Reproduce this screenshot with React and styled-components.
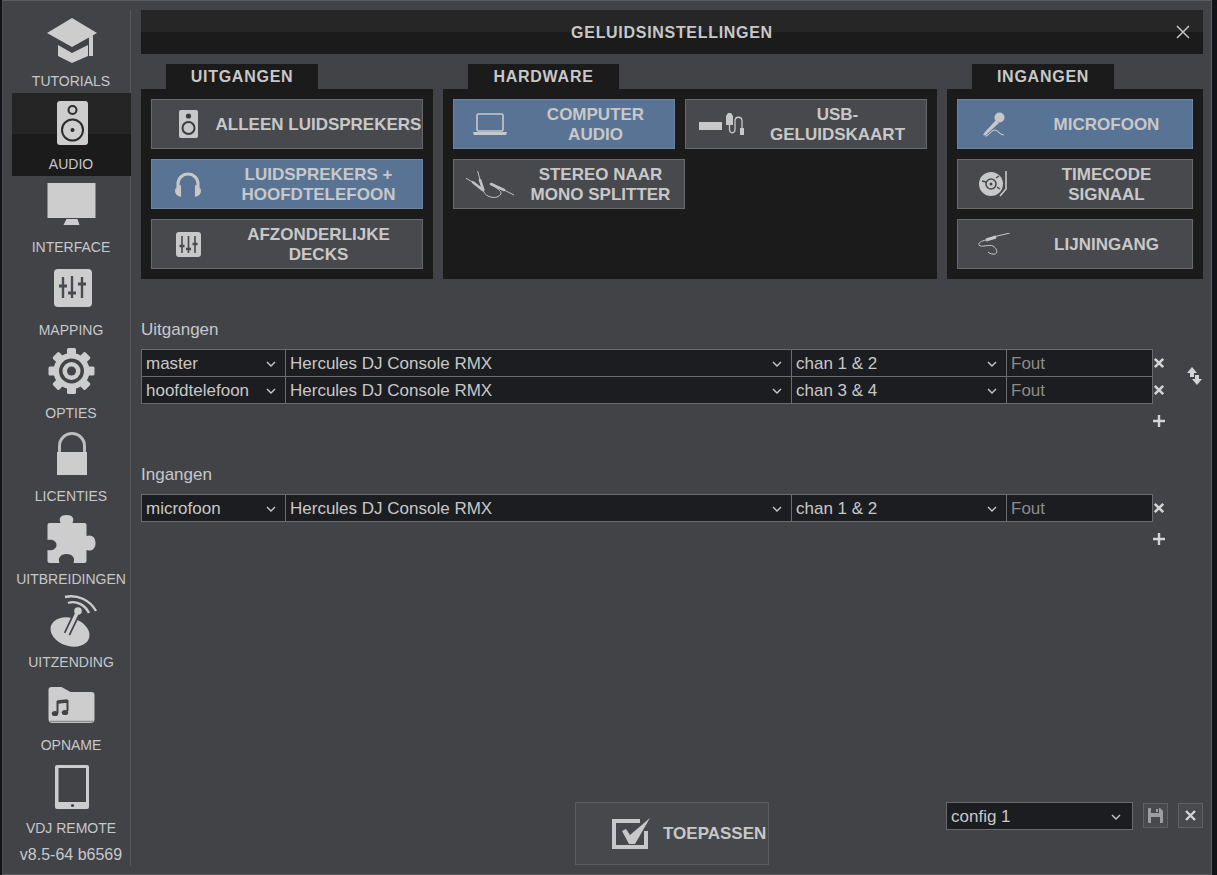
import React from "react"
import styled, {createGlobalStyle} from "styled-components"

const ink = "#cdcdcd"
const dark = "#2b2b2d"

const Global = createGlobalStyle`
  html, body {
    margin: 0;
    padding: 0;
    background: #121317;
    overflow: hidden;
  }
  body {
    font-family: "Liberation Sans", Arial, sans-serif;
  }
`

const Window = styled.div`
  box-sizing: border-box;
  margin-left: 2px;
  width: 1210px;
  height: 875px;
  display: flex;
  background: #424347;
  border: 1px solid #5c5d60;
  border-left-color: #4c4d50;
  color: #c8c8c8;
`

const Nav = styled.nav`
  box-sizing: border-box;
  flex: none;
  width: 119px;
  margin: 9px 0 8px 9px;
  border-right: 1px solid #56575a;
  display: flex;
  flex-direction: column;
`

const NavItem = styled.div`
  flex: none;
  height: 83px;
  margin-right: -1px;
  padding-top: 6px;
  box-sizing: border-box;
  display: flex;
  flex-direction: column;
  align-items: center;
  background: ${props => props.$active ? "linear-gradient(#252526 0, #252526 41px, #1b1b1b 41px)" : "none"};
`

const NavIcon = styled.svg`
  display: block;
  width: 60px;
  height: 50px;
  overflow: visible;
`

const NavLabel = styled.div`
  margin-top: 7px;
  padding-right: 1px;
  font-size: 14px;
  line-height: 16px;
  color: #c6c8cc;
  white-space: nowrap;
`

const Version = styled.div`
  margin-top: 6px;
  font-size: 16px;
  line-height: 18px;
  text-align: center;
  color: #c6c8cc;
`

const Main = styled.main`
  flex: 1;
  min-width: 0;
  display: flex;
  flex-direction: column;
  padding: 9px 8px 9px 10px;
`

const TitleBar = styled.header`
  flex: none;
  height: 44px;
  display: grid;
  grid-template-columns: 1fr auto 1fr;
  align-items: center;
  background: linear-gradient(#262627 0, #262627 22px, #1b1b1b 22px);
`

const Title = styled.h1`
  grid-column: 2;
  margin: 0;
  padding-top: 2px;
  font-size: 16px;
  font-weight: bold;
  letter-spacing: 0.7px;
  color: #c8c8c8;
`

const Close = styled.svg`
  grid-column: 3;
  justify-self: end;
  margin-right: 13px;
  width: 14px;
  height: 14px;
`

const Panels = styled.div`
  margin-top: 10px;
  display: grid;
  grid-template-columns: 292px 494px 256px;
  gap: 10px;
`

const Tab = styled.div`
  box-sizing: border-box;
  width: ${props => props.$width}px;
  height: 25px;
  margin-left: 25px;
  background: #1b1b1b;
  font-size: 16px;
  font-weight: bold;
  letter-spacing: 0.75px;
  line-height: 26px;
  text-align: center;
`

const PanelBody = styled.div`
  box-sizing: border-box;
  height: 190px;
  padding: 10px;
  background: #1b1b1b;
  display: flex;
  flex-wrap: wrap;
  align-content: flex-start;
  gap: 10px;
`

const ModeButton = styled.button`
  box-sizing: border-box;
  width: ${props => props.$width}px;
  height: 50px;
  padding: 0;
  display: flex;
  align-items: center;
  font-family: inherit;
  color: #c8c8c8;
  background: ${props => props.$on ? "#587394" : "#48494d"};
  border: 1px solid ${props => props.$on ? "#6c84a1" : "#68696c"};
`

const ModeIcon = styled.span`
  flex: none;
  width: 72px;
  margin-right: -9px;
  display: flex;
  justify-content: center;
  align-items: center;
`

const ModeText = styled.span`
  flex: 1;
  min-width: 0;
  padding-top: 2px;
  font-size: 17px;
  font-weight: bold;
  line-height: 20px;
  text-align: center;
  white-space: pre-line;
`

const SectionLabel = styled.div`
  margin-top: ${props => props.$top}px;
  margin-bottom: 10px;
  padding-top: 1px;
  font-size: 17px;
  line-height: 19px;
  color: #c6c8cc;
`

const RowGroup = styled.div`
  display: flex;
  align-items: stretch;
`

const Table = styled.div`
  flex: none;
  width: 1012px;
  box-sizing: border-box;
  display: grid;
  grid-template-columns: 143px 505px 214px 145px;
  grid-auto-rows: 26px;
  gap: 1px;
  background: #6a6b6d;
  border: 1px solid #6a6b6d;
`

const Cell = styled.div`
  box-sizing: border-box;
  display: flex;
  justify-content: space-between;
  align-items: center;
  padding: 2px 9px 0 4px;
  background: #1c1d20;
  font-size: 17px;
  color: ${props => props.$muted ? "#8b8b8b" : "#c8c8c8"};
  white-space: nowrap;
`

const Chevron = styled.svg`
  flex: none;
  width: 10px;
  height: 6px;
`

const RemoveColumn = styled.div`
  flex: none;
  width: 12px;
  padding-top: 1px;
  display: grid;
  grid-auto-rows: 26px;
  gap: 1px;
  align-items: center;
`

const SmallCross = styled.svg`
  display: block;
  width: 12px;
  height: 12px;
`

const Swap = styled.svg`
  align-self: center;
  margin-left: 22px;
  width: 15px;
  height: 19px;
`

const Add = styled.svg`
  display: block;
  margin: 10px 0 0 1011px;
  width: 14px;
  height: 14px;
`

const Footer = styled.footer`
  margin-top: auto;
  display: grid;
  grid-template-columns: 1fr auto 1fr;
  align-items: start;
`

const Apply = styled.button`
  grid-column: 2;
  box-sizing: border-box;
  width: 194px;
  height: 63px;
  padding: 0 0 0 36px;
  display: flex;
  align-items: center;
  gap: 13px;
  font-family: inherit;
  font-size: 17px;
  font-weight: bold;
  color: #c8c8c8;
  background: #47484c;
  border: 1px solid #5c5d60;
`

const FooterRight = styled.div`
  grid-column: 3;
  justify-self: end;
  display: flex;
  align-items: flex-start;
`

const ConfigSelect = styled.div`
  box-sizing: border-box;
  width: 187px;
  height: 28px;
  display: flex;
  justify-content: space-between;
  align-items: center;
  padding: 2px 11px 0 4px;
  background: #1c1d20;
  border: 1px solid #6a6b6d;
  font-size: 17px;
`

const SquareButton = styled.button`
  box-sizing: border-box;
  width: 25px;
  height: 25px;
  margin: 1px 0 0 10px;
  padding: 0;
  display: flex;
  justify-content: center;
  align-items: center;
  background: #48494d;
  border: 1px solid #5f6063;
`

const chevron = (
  <Chevron viewBox="0 0 10 6">
    <path d="M1 1 L5 5 L9 1" fill="none" stroke="#c8c8c8" strokeWidth="1.4" />
  </Chevron>
)

const cross = (
  <SmallCross viewBox="0 0 12 12">
    <path d="M1.8 1.8 L10.2 10.2 M10.2 1.8 L1.8 10.2" stroke="#d4d4d4" strokeWidth="2.6" />
  </SmallCross>
)

const gearTeeth = [0, 45, 90, 135, 180, 225, 270, 315]

const navItems = [
  {label: "TUTORIALS", icon: (
    <g fill={ink}>
      <path d="M5 17 L30 2 L55 17 L30 31 Z" />
      <path d="M16 29 L30 37 L46 29 V40 L30 47 L16 40 Z" />
      <path d="M47 21 L51 19 V40 H47 Z" />
    </g>
  )},
  {label: "AUDIO", active: true, icon: (
    <g>
      <rect x="15" y="2" width="31" height="44" rx="3" fill={ink} />
      <circle cx="30.5" cy="11" r="4" fill="none" stroke={dark} strokeWidth="2" />
      <circle cx="30.5" cy="31" r="10.5" fill="none" stroke={dark} strokeWidth="2" />
      <circle cx="30.5" cy="31" r="2" fill={dark} />
    </g>
  )},
  {label: "INTERFACE", icon: (
    <g fill={ink}>
      <rect x="5.5" y="1" width="48" height="35" />
      <path d="M24.5 37 H35.5 L37.5 43 H21.5 Z" />
    </g>
  )},
  {label: "MAPPING", icon: (
    <g>
      <rect x="12" y="4" width="38" height="38" rx="4" fill={ink} />
      <path d="M21 12 V33 M30 11 V33 M40 12 V33" stroke="#4a4b4e" strokeWidth="2.4" />
      <path d="M17 21 H25 M26 28 H34 M36 19 H44" stroke="#4a4b4e" strokeWidth="3" />
    </g>
  )},
  {label: "OPTIES", icon: (
    <g transform="translate(-0.5 0)">
      <g fill={ink}>
        {gearTeeth.map(a => <rect key={a} x="25.5" y="0" width="9" height="12" rx="1.5" transform={"rotate(" + a + " 30 23)"} />)}
        <circle cx="30" cy="23" r="18" />
      </g>
      <circle cx="30" cy="23" r="12.5" fill="#424347" />
      <circle cx="30" cy="23" r="9" fill={ink} />
      <circle cx="30" cy="23" r="4.5" fill="#424347" />
    </g>
  )},
  {label: "LICENTIES", icon: (
    <g>
      <path d="M17.5 22 V15 a12.5 12.5 0 0 1 25 0 V22" fill="none" stroke="#bdbdbd" strokeWidth="3" />
      <rect x="15" y="21" width="30" height="23" fill={ink} />
    </g>
  )},
  {label: "UITBREIDINGEN", icon: (
    <path fill={ink} transform="translate(-0.5 0)" d="M6 11 a2 2 0 0 1 2-2 H19 c-2-5 0-8 6-8 s8 3 6 8 H43 a2 2 0 0 1 2 2 V22 c5-2 9 1 9 7 s-4 9-9 7 V47 a2 2 0 0 1-2 2 H32 c2-5-1-9-7-9 s-9 4-7 9 H8 a2 2 0 0 1-2-2 V36 c5 1 9-1 9-5 s-4-6-9-5 z" />
  )},
  {label: "UITZENDING", icon: (
    <g>
      <ellipse cx="28" cy="35" rx="20" ry="14" transform="rotate(18 28 35)" fill={ink} />
      <path d="M25 37 L36 14" stroke="#424347" strokeWidth="7" />
      <path d="M25 37 L36 14" stroke={ink} strokeWidth="3.6" strokeLinecap="round" />
      <circle cx="36" cy="14" r="3.8" fill={ink} />
      <path d="M23 0 C35 -3 48 3 54 14" fill="none" stroke={ink} strokeWidth="2.4" />
      <path d="M26 6 C34 3 43 8 47 16" fill="none" stroke={ink} strokeWidth="2.4" />
    </g>
  )},
  {label: "OPNAME", icon: (
    <g transform="translate(-0.5 0)">
      <path fill={ink} d="M7 10 a3 3 0 0 1 3-3 H20 l9 5 H50 a3 3 0 0 1 3 3 V39 a4 4 0 0 1-4 4 H11 a4 4 0 0 1-4-4 z" />
      <path d="M8 41.5 H52" stroke="#8e8e8e" strokeWidth="1.5" />
      <path d="M16 33 V22 L26 21 V31" fill="none" stroke="#424347" strokeWidth="2" />
      <path d="M16 22 L26 21" stroke="#424347" strokeWidth="3.4" />
      <ellipse cx="13.5" cy="33.5" rx="3.2" ry="2.6" fill="#424347" />
      <ellipse cx="23.5" cy="32.5" rx="3.2" ry="2.6" fill="#424347" />
    </g>
  )},
  {label: "VDJ REMOTE", icon: (
    <g>
      <rect x="13" y="2" width="34" height="44" rx="2" fill={ink} />
      <rect x="16.5" y="5" width="27.5" height="34" fill="#424347" />
      <circle cx="30.5" cy="42.5" r="1.6" fill="#424347" />
    </g>
  )}
]

const SpeakerIcon = () => (
  <svg width="19" height="28" viewBox="0 0 19 28">
    <rect width="19" height="28" rx="2" fill="#c8c8c8" />
    <circle cx="9.5" cy="6" r="2.6" fill="#3a3b3e" />
    <circle cx="9.5" cy="18" r="6" fill="none" stroke="#3a3b3e" strokeWidth="2" />
  </svg>
)

const HeadphonesIcon = () => (
  <svg width="26" height="25" viewBox="0 0 26 25">
    <path d="M3 15 V12 a10 10 0 0 1 20 0 V15" fill="none" stroke="#c8c8c8" strokeWidth="3" />
    <path d="M6 13 V25 C2 24 0 22 0 19 C0 16 2 14 6 13 Z M20 13 V25 C24 24 26 22 26 19 C26 16 24 14 20 13 Z" fill="#c8c8c8" />
  </svg>
)

const MixerIcon = () => (
  <svg width="25" height="25" viewBox="0 0 25 25">
    <rect width="25" height="25" rx="3" fill="#c8c8c8" />
    <path d="M6 4 V21 M12.5 4 V21 M19 4 V21" stroke="#48494d" strokeWidth="1.6" />
    <path d="M3.5 14 H8.5 M10 17 H15 M16.5 12 H21.5" stroke="#48494d" strokeWidth="2.4" />
  </svg>
)

const LaptopIcon = () => (
  <svg width="34" height="22" viewBox="0 0 34 22">
    <rect x="4" y="1" width="26" height="17" rx="1.5" fill="none" stroke="#c8c8c8" strokeWidth="1.6" />
    <path d="M0 19 H34 L33 22 H1 Z" fill="#c8c8c8" />
  </svg>
)

const UsbIcon = () => (
  <svg width="47" height="22" viewBox="0 0 47 22">
    <rect x="0" y="9" width="23" height="8" fill="#c8c8c8" />
    <path d="M29 0 H32 L34 3 V12 H27 V3 Z" fill="#c8c8c8" />
    <path d="M30.5 12 V16 C30.5 21 36 21 36 16 V8 C36 3 43 3 43 8 V15" fill="none" stroke="#c8c8c8" strokeWidth="1.3" />
    <rect x="41" y="15" width="4" height="7" fill="#c8c8c8" />
  </svg>
)

const SplitterIcon = () => (
  <svg width="48" height="27" viewBox="0 0 48 27">
    <g stroke="#c2c2c2" fill="none" strokeLinecap="round">
      <path d="M0 7.3 L7 11.3 M11.7 0 L14 9" strokeWidth="1" />
      <path d="M7 11.3 L16.7 19 M14 9 L17.3 19" strokeWidth="2.6" />
      <path d="M17.3 20 C20 27 31 29 35 23 C36 20 30 17 25 13" strokeWidth="1" />
      <path d="M25 13 L38 19" strokeWidth="2.6" />
      <path d="M38 19 L48 24" strokeWidth="1" />
    </g>
  </svg>
)

const MicIcon = () => (
  <svg width="22" height="25" viewBox="0 0 22 25">
    <circle cx="16.5" cy="5.5" r="5" fill="#c8c8c8" />
    <path d="M13 8 L2 20 L0 23 C3 24 4 22 6 20 L16 11 Z" fill="#c8c8c8" />
    <path d="M2 24 C6 25 8 17 12 18 C16 19 17 23 21 23" fill="none" stroke="#c8c8c8" strokeWidth="1.1" />
  </svg>
)

const TurntableIcon = () => (
  <svg width="30" height="28" viewBox="0 0 30 28">
    <circle cx="12" cy="14" r="12" fill="#c8c8c8" />
    <circle cx="12" cy="14" r="5" fill="none" stroke="#48494d" strokeWidth="1.6" />
    <circle cx="12" cy="14" r="1.5" fill="#48494d" />
    <path d="M3 11 L7 12 M18 17 L21 19 M17 8 L20 6" stroke="#48494d" strokeWidth="1.4" />
    <path d="M27 1 V19 L21 26" fill="none" stroke="#c8c8c8" strokeWidth="1.6" />
  </svg>
)

const LineIcon = () => (
  <svg width="32" height="22" viewBox="0 0 32 22">
    <path d="M15 4 L32 0" stroke="#c8c8c8" strokeWidth="1" />
    <path d="M8 7 L18 4" stroke="#c8c8c8" strokeWidth="3" />
    <path d="M8 7 C3 8 0 10 1 12 C3 15 11 11 15 13 C20 16 20 22 15 21 C13 21 11 20 10 19" fill="none" stroke="#c8c8c8" strokeWidth="1" />
  </svg>
)

const panels = [
  {tab: "UITGANGEN", width: 152, buttons: [
    {text: "ALLEEN LUIDSPREKERS", width: 272, icon: <SpeakerIcon />},
    {text: "LUIDSPREKERS +\nHOOFDTELEFOON", width: 272, on: true, icon: <HeadphonesIcon />},
    {text: "AFZONDERLIJKE\nDECKS", width: 272, icon: <MixerIcon />}
  ]},
  {tab: "HARDWARE", width: 151, buttons: [
    {text: "COMPUTER\nAUDIO", width: 222, on: true, icon: <LaptopIcon />},
    {text: "USB-\nGELUIDSKAART", width: 242, icon: <UsbIcon />},
    {text: "STEREO NAAR\nMONO SPLITTER", width: 232, icon: <SplitterIcon />}
  ]},
  {tab: "INGANGEN", width: 142, buttons: [
    {text: "MICROFOON", width: 236, on: true, icon: <MicIcon />},
    {text: "TIMECODE\nSIGNAAL", width: 236, icon: <TurntableIcon />},
    {text: "LIJNINGANG", width: 236, icon: <LineIcon />}
  ]}
]

const outputs = [
  ["master", "Hercules DJ Console RMX", "chan 1 & 2"],
  ["hoofdtelefoon", "Hercules DJ Console RMX", "chan 3 & 4"]
]
const inputs = [
  ["microfoon", "Hercules DJ Console RMX", "chan 1 & 2"]
]

const addIcon = (
  <Add viewBox="0 0 14 14">
    <path d="M7 1 V13 M1 7 H13" stroke="#d4d4d4" strokeWidth="2.4" />
  </Add>
)

const renderRows = function(rows) {
  return (
    <Table>
      {rows.map((row, i) => (
        <React.Fragment key={i}>
          {row.map((value, j) => <Cell key={j}>{value}{chevron}</Cell>)}
          <Cell $muted>Fout</Cell>
        </React.Fragment>
      ))}
    </Table>
  )
}

export default () => (
  <Window>
    <Global />
    <Nav>
      {navItems.map(item => (
        <NavItem key={item.label} $active={item.active}>
          <NavIcon viewBox="0 0 60 50">{item.icon}</NavIcon>
          <NavLabel>{item.label}</NavLabel>
        </NavItem>
      ))}
      <Version>v8.5-64 b6569</Version>
    </Nav>
    <Main>
      <TitleBar>
        <Title>GELUIDSINSTELLINGEN</Title>
        <Close viewBox="0 0 14 14">
          <path d="M1 1 L13 13 M13 1 L1 13" stroke="#c4c4c4" strokeWidth="1.5" />
        </Close>
      </TitleBar>
      <Panels>
        {panels.map(panel => (
          <div key={panel.tab}>
            <Tab $width={panel.width}>{panel.tab}</Tab>
            <PanelBody>
              {panel.buttons.map(button => (
                <ModeButton key={button.text} $width={button.width} $on={button.on}>
                  <ModeIcon>{button.icon}</ModeIcon>
                  <ModeText>{button.text}</ModeText>
                </ModeButton>
              ))}
            </PanelBody>
          </div>
        ))}
      </Panels>

      <SectionLabel $top={40}>Uitgangen</SectionLabel>
      <RowGroup>
        {renderRows(outputs)}
        <RemoveColumn>{cross}{cross}</RemoveColumn>
        <Swap viewBox="0 0 15 19">
          <path d="M5 0 L10 6 H7 V10 H3 V6 H0 Z M10 18 L15 12 H12 V8 H8 V12 H5 Z" fill="#d4d4d4" />
        </Swap>
      </RowGroup>
      {addIcon}

      <SectionLabel $top={36}>Ingangen</SectionLabel>
      <RowGroup>
        {renderRows(inputs)}
        <RemoveColumn>{cross}</RemoveColumn>
      </RowGroup>
      {addIcon}

      <Footer>
        <Apply>
          <svg width="38" height="31" viewBox="0 0 38 31">
            <path d="M34 13 V29 H2 V3 H28" fill="none" stroke="#c8c8c8" strokeWidth="4" />
            <path d="M10 13 L14 11 L18 17 L38 0 L23 26 H17 Z" fill="#c8c8c8" />
          </svg>
          TOEPASSEN
        </Apply>
        <FooterRight>
          <ConfigSelect>config 1{chevron}</ConfigSelect>
          <SquareButton>
            <svg width="15" height="15" viewBox="0 0 15 15">
              <path d="M0 1 a1 1 0 0 1 1-1 H12 L15 3 V14 a1 1 0 0 1-1 1 H1 a1 1 0 0 1-1-1 Z" fill="#9d9ea0" />
              <rect x="3" y="0" width="8" height="5" fill="#48494d" />
              <rect x="8" y="1" width="2" height="3" fill="#9d9ea0" />
              <rect x="3" y="9" width="9" height="6" fill="#48494d" />
            </svg>
          </SquareButton>
          <SquareButton>
            <svg width="11" height="11" viewBox="0 0 11 11">
              <path d="M1 1 L10 10 M10 1 L1 10" stroke="#d4d4d4" strokeWidth="2.4" />
            </svg>
          </SquareButton>
        </FooterRight>
      </Footer>
    </Main>
  </Window>
)
